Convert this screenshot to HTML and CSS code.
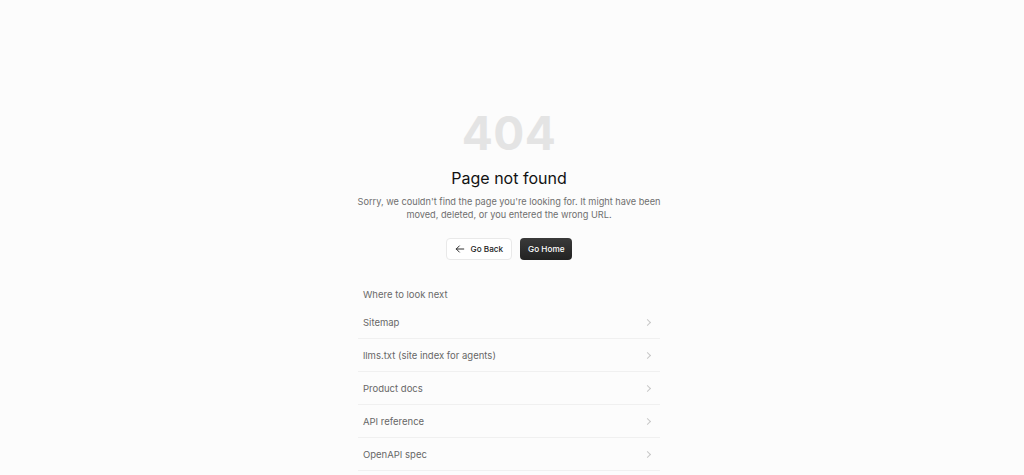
FILE: index.html
```html
<!DOCTYPE html>
<html lang="en">
<head>
    <meta charset="UTF-8">
    <meta name="viewport" content="width=device-width, initial-scale=1.0">
    <title>Page not found</title>
    <link rel="stylesheet" href="styles.css">
</head>
<body>
    <main class="not-found">
        <div class="code">404</div>
        <h1>Page not found</h1>
        <p class="lead">Sorry, we couldn't find the page you're looking for. It might have been moved, deleted, or you entered the wrong URL.</p>

        <div class="actions">
            <a href="#" class="btn btn-outline">
                <svg width="10" height="10" viewBox="0 0 16 16" fill="none" stroke="currentColor" stroke-width="1.5" stroke-linecap="round" stroke-linejoin="round">
                    <path d="M14 8H2"/>
                    <path d="M7 3L2 8l5 5"/>
                </svg>
                Go Back
            </a>
            <a href="#" class="btn btn-dark">Go Home</a>
        </div>

        <section class="next">
            <h2>Where to look next</h2>
            <ul class="links">
                <li><a href="#">Sitemap <span class="chev"></span></a></li>
                <li><a href="#">llms.txt (site index for agents) <span class="chev"></span></a></li>
                <li><a href="#">Product docs <span class="chev"></span></a></li>
                <li><a href="#">API reference <span class="chev"></span></a></li>
                <li><a href="#">OpenAPI spec <span class="chev"></span></a></li>
            </ul>
        </section>
    </main>
</body>
</html>
```

FILE: styles.css
```css
html {
    background: #fcfcfc;
}
::-webkit-scrollbar {
    width: 6px;
}
::-webkit-scrollbar-track {
    background: transparent;
}
::-webkit-scrollbar-thumb {
    background: #e0dfe6;
    border-left: 4px solid transparent;
    background-clip: padding-box;
}
body {
    margin: 0;
    padding-right: 6px;
    font-family: Inter, "Noto Sans", sans-serif;
    color: #222;
}
.not-found {
    width: 302px;
    margin: 0 auto;
    padding: 108px 0 170px;
    text-align: center;
}
.code {
    font-size: 46px;
    font-weight: 700;
    line-height: 50px;
    color: #e4e4e4;
    letter-spacing: 0.5px;
}
h1 {
    margin: 10px 0 0;
    font-size: 16px;
    font-weight: 400;
    line-height: 20px;
    color: #111;
}
.lead {
    margin: 7px -6px 0;
    font-size: 9.2px;
    line-height: 13px;
    color: #6f6f6f;
}
.actions {
    display: flex;
    justify-content: center;
    gap: 8px;
    margin-top: 17px;
}
.btn {
    display: inline-flex;
    align-items: center;
    gap: 6px;
    height: 22px;
    padding: 0 8px;
    box-sizing: border-box;
    border-radius: 4px;
    font-size: 8.2px;
    font-weight: 500;
    text-decoration: none;
}
.btn-outline {
    background: #fff;
    border: 1px solid #e9e9e9;
    color: #222;
}
.btn-dark {
    background: linear-gradient(#3a3a3a, #222);
    color: #fff;
}
.next {
    margin-top: 28px;
    text-align: left;
}
h2 {
    margin: 0;
    padding: 0 5px 4px;
    font-size: 9.5px;
    font-weight: 400;
    line-height: 14px;
    color: #6a6a6a;
}
.links {
    list-style: none;
    margin: 0;
    padding: 0;
}
.links li {
    border-bottom: 1px solid #f0f0f0;
}
.links a {
    display: flex;
    justify-content: space-between;
    align-items: center;
    height: 32px;
    padding: 0 10px 0 5px;
    font-size: 9.5px;
    color: #676767;
    text-decoration: none;
}
.chev {
    width: 4px;
    height: 4px;
    border-top: 1px solid #c8c8c8;
    border-right: 1px solid #c8c8c8;
    transform: rotate(45deg);
}
```
